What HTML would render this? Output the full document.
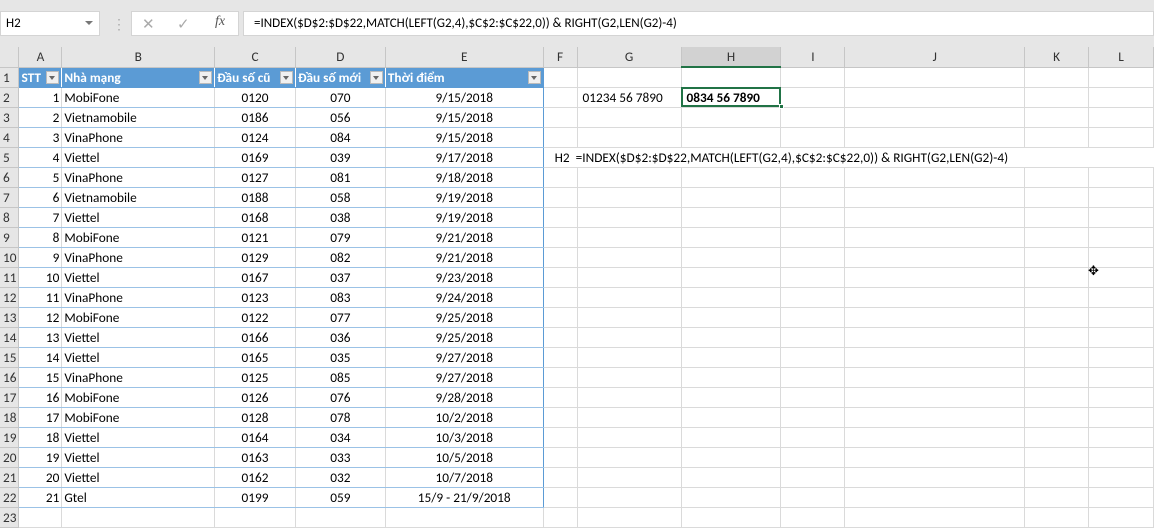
<!DOCTYPE html>
<html><head><meta charset="utf-8"><style>
*{margin:0;padding:0;box-sizing:border-box}
body{width:1154px;height:510px;overflow:hidden;background:#fff;font-family:Calibri,"Liberation Sans",sans-serif;font-size:13px;color:#000;position:relative}
.top{position:absolute;left:0;top:0;width:1154px;height:47px;background:#e6e6e6}
.nb{position:absolute;left:0;top:11px;width:100px;height:25px;background:#fff;border:1px solid #d4d4d4;padding:4px 5px;font-size:13px}
.nb i{position:absolute;right:6px;top:9px;border:4px solid transparent;border-top:4px solid #777;border-bottom:0}
.ib{position:absolute;left:131px;top:11px;width:108px;height:25px;background:#fff;border:1px solid #d4d4d4;color:#aaa}
.fb{position:absolute;left:243px;top:11px;width:911px;height:25px;background:#fff;border:1px solid #d4d4d4;padding:4px 10px;font-size:13px}
table{position:absolute;left:0;top:47px;border-collapse:collapse;table-layout:fixed}
td{height:20px;border-right:1px solid #dadada;border-bottom:1px solid #dadada;padding:0 2px;white-space:nowrap;overflow:hidden;font-size:13.3px;line-height:19px}
tr.h td{background:#e6e6e6;text-align:center;color:#333;border-right:1px solid #c6c6c6;border-bottom:1px solid #c6c6c6}
td.rh{background:#e6e6e6;color:#333;padding-left:3px;border-right:1px solid #c6c6c6;border-bottom:1px solid #c6c6c6}
tr.t1 td.tb{background:#5b9bd5;color:#fff;font-weight:bold;position:relative;border-right:1px solid #fff;border-bottom:1px solid #5b9bd5}
td.tb .dd{position:absolute;right:2px;top:3px;width:13px;height:13px;background:#f0f0f0;border:1px solid #bbb}
td.tb .dd:after{content:"";position:absolute;left:2px;top:4px;border:3.5px solid transparent;border-top:4px solid #666;border-bottom:0}
td.tc{border-bottom:1px solid #9bc2e6}
.r{text-align:right}.c{text-align:center}
</style></head><body>
<div class="top"></div>
<div class="nb">H2<i></i></div>
<div style="position:absolute;left:112px;top:16px;color:#aaa;font-size:14px">⋮</div>
<div class="ib"><span style="position:absolute;left:10px;top:3px;font-size:15px">✕</span><span style="position:absolute;left:45px;top:3px;font-size:15px">✓</span><span style="position:absolute;left:83px;top:2px;font-style:italic;color:#555;font-family:'Liberation Serif',serif;font-size:14px">fx</span></div>
<div class="fb">=INDEX($D$2:$D$22,MATCH(LEFT(G2,4),$C$2:$C$22,0)) &amp; RIGHT(G2,LEN(G2)-4)</div>
<table>
<colgroup><col style="width:18px"><col style="width:43px"><col style="width:153px"><col style="width:81px"><col style="width:90px"><col style="width:158px"><col style="width:34px"><col style="width:104px"><col style="width:100px"><col style="width:64px"><col style="width:180px"><col style="width:64px"><col style="width:65px"></colgroup>
<tr class="h"><td style="background:#e6e6e6"></td><td>A</td><td>B</td><td>C</td><td>D</td><td>E</td><td>F</td><td>G</td><td style="background:#d2d2d2;border-bottom:2px solid #217346">H</td><td>I</td><td>J</td><td>K</td><td>L</td></tr>
<tr class="t1"><td class="rh">1</td><td class="tb">STT<span class="dd"></span></td><td class="tb">Nhà mạng<span class="dd"></span></td><td class="tb">Đầu số cũ<span class="dd"></span></td><td class="tb">Đầu số mới<span class="dd"></span></td><td class="tb" style="border-right:1px solid #5b9bd5">Thời điểm<span class="dd"></span></td><td></td><td></td><td></td><td></td><td></td><td></td><td></td></tr>
<tr><td class="rh">2</td><td class="tc r">1</td><td class="tc">MobiFone</td><td class="tc c">0120</td><td class="tc c">070</td><td class="tc c" style="border-right:1px solid #5b9bd5">9/15/2018</td><td></td><td>&nbsp;01234 56 7890</td><td style="outline:2px solid #217346;outline-offset:-2px;font-weight:bold">&nbsp;0834 56 7890</td><td></td><td></td><td></td><td></td></tr>
<tr><td class="rh">3</td><td class="tc r">2</td><td class="tc">Vietnamobile</td><td class="tc c">0186</td><td class="tc c">056</td><td class="tc c" style="border-right:1px solid #5b9bd5">9/15/2018</td><td></td><td></td><td></td><td></td><td></td><td></td><td></td></tr>
<tr><td class="rh">4</td><td class="tc r">3</td><td class="tc">VinaPhone</td><td class="tc c">0124</td><td class="tc c">084</td><td class="tc c" style="border-right:1px solid #5b9bd5">9/15/2018</td><td></td><td></td><td></td><td></td><td></td><td></td><td></td></tr>
<tr><td class="rh">5</td><td class="tc r">4</td><td class="tc">Viettel</td><td class="tc c">0169</td><td class="tc c">039</td><td class="tc c" style="border-right:1px solid #5b9bd5">9/17/2018</td><td colspan="7" style="overflow:visible;border-right:0">&nbsp;&nbsp;&nbsp;H2&nbsp; =INDEX($D$2:$D$22,MATCH(LEFT(G2,4),$C$2:$C$22,0)) &amp; RIGHT(G2,LEN(G2)-4)</td></tr>
<tr><td class="rh">6</td><td class="tc r">5</td><td class="tc">VinaPhone</td><td class="tc c">0127</td><td class="tc c">081</td><td class="tc c" style="border-right:1px solid #5b9bd5">9/18/2018</td><td></td><td></td><td></td><td></td><td></td><td></td><td></td></tr>
<tr><td class="rh">7</td><td class="tc r">6</td><td class="tc">Vietnamobile</td><td class="tc c">0188</td><td class="tc c">058</td><td class="tc c" style="border-right:1px solid #5b9bd5">9/19/2018</td><td></td><td></td><td></td><td></td><td></td><td></td><td></td></tr>
<tr><td class="rh">8</td><td class="tc r">7</td><td class="tc">Viettel</td><td class="tc c">0168</td><td class="tc c">038</td><td class="tc c" style="border-right:1px solid #5b9bd5">9/19/2018</td><td></td><td></td><td></td><td></td><td></td><td></td><td></td></tr>
<tr><td class="rh">9</td><td class="tc r">8</td><td class="tc">MobiFone</td><td class="tc c">0121</td><td class="tc c">079</td><td class="tc c" style="border-right:1px solid #5b9bd5">9/21/2018</td><td></td><td></td><td></td><td></td><td></td><td></td><td></td></tr>
<tr><td class="rh">10</td><td class="tc r">9</td><td class="tc">VinaPhone</td><td class="tc c">0129</td><td class="tc c">082</td><td class="tc c" style="border-right:1px solid #5b9bd5">9/21/2018</td><td></td><td></td><td></td><td></td><td></td><td></td><td></td></tr>
<tr><td class="rh">11</td><td class="tc r">10</td><td class="tc">Viettel</td><td class="tc c">0167</td><td class="tc c">037</td><td class="tc c" style="border-right:1px solid #5b9bd5">9/23/2018</td><td></td><td></td><td></td><td></td><td></td><td></td><td></td></tr>
<tr><td class="rh">12</td><td class="tc r">11</td><td class="tc">VinaPhone</td><td class="tc c">0123</td><td class="tc c">083</td><td class="tc c" style="border-right:1px solid #5b9bd5">9/24/2018</td><td></td><td></td><td></td><td></td><td></td><td></td><td></td></tr>
<tr><td class="rh">13</td><td class="tc r">12</td><td class="tc">MobiFone</td><td class="tc c">0122</td><td class="tc c">077</td><td class="tc c" style="border-right:1px solid #5b9bd5">9/25/2018</td><td></td><td></td><td></td><td></td><td></td><td></td><td></td></tr>
<tr><td class="rh">14</td><td class="tc r">13</td><td class="tc">Viettel</td><td class="tc c">0166</td><td class="tc c">036</td><td class="tc c" style="border-right:1px solid #5b9bd5">9/25/2018</td><td></td><td></td><td></td><td></td><td></td><td></td><td></td></tr>
<tr><td class="rh">15</td><td class="tc r">14</td><td class="tc">Viettel</td><td class="tc c">0165</td><td class="tc c">035</td><td class="tc c" style="border-right:1px solid #5b9bd5">9/27/2018</td><td></td><td></td><td></td><td></td><td></td><td></td><td></td></tr>
<tr><td class="rh">16</td><td class="tc r">15</td><td class="tc">VinaPhone</td><td class="tc c">0125</td><td class="tc c">085</td><td class="tc c" style="border-right:1px solid #5b9bd5">9/27/2018</td><td></td><td></td><td></td><td></td><td></td><td></td><td></td></tr>
<tr><td class="rh">17</td><td class="tc r">16</td><td class="tc">MobiFone</td><td class="tc c">0126</td><td class="tc c">076</td><td class="tc c" style="border-right:1px solid #5b9bd5">9/28/2018</td><td></td><td></td><td></td><td></td><td></td><td></td><td></td></tr>
<tr><td class="rh">18</td><td class="tc r">17</td><td class="tc">MobiFone</td><td class="tc c">0128</td><td class="tc c">078</td><td class="tc c" style="border-right:1px solid #5b9bd5">10/2/2018</td><td></td><td></td><td></td><td></td><td></td><td></td><td></td></tr>
<tr><td class="rh">19</td><td class="tc r">18</td><td class="tc">Viettel</td><td class="tc c">0164</td><td class="tc c">034</td><td class="tc c" style="border-right:1px solid #5b9bd5">10/3/2018</td><td></td><td></td><td></td><td></td><td></td><td></td><td></td></tr>
<tr><td class="rh">20</td><td class="tc r">19</td><td class="tc">Viettel</td><td class="tc c">0163</td><td class="tc c">033</td><td class="tc c" style="border-right:1px solid #5b9bd5">10/5/2018</td><td></td><td></td><td></td><td></td><td></td><td></td><td></td></tr>
<tr><td class="rh">21</td><td class="tc r">20</td><td class="tc">Viettel</td><td class="tc c">0162</td><td class="tc c">032</td><td class="tc c" style="border-right:1px solid #5b9bd5">10/7/2018</td><td></td><td></td><td></td><td></td><td></td><td></td><td></td></tr>
<tr><td class="rh">22</td><td class="tc r">21</td><td class="tc">Gtel</td><td class="tc c">0199</td><td class="tc c">059</td><td class="tc c" style="border-right:1px solid #5b9bd5">15/9 - 21/9/2018</td><td></td><td></td><td></td><td></td><td></td><td></td><td></td></tr>
<tr><td class="rh">23</td><td></td><td></td><td></td><td></td><td></td><td></td><td></td><td></td><td></td><td></td><td></td><td></td></tr>
</table>
<div style="position:absolute;left:779px;top:104px;width:5px;height:5px;background:#217346;border:1px solid #fff"></div>
<div style="position:absolute;left:1088px;top:264px;font-size:13px;color:#000">✥</div>
</body></html>
